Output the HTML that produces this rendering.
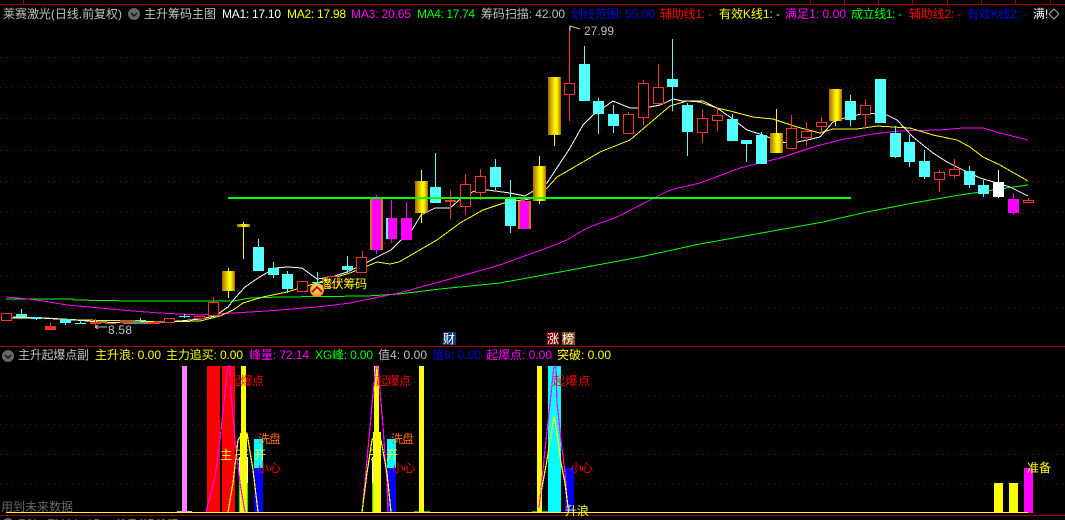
<!DOCTYPE html>
<html><head><meta charset="utf-8"><style>
html,body{margin:0;padding:0;background:#000;width:1065px;height:520px;overflow:hidden}
svg{display:block}
text{font-family:"Liberation Sans","WenQuanYi Zen Hei","Noto Sans CJK SC",sans-serif;font-size:12px}
.c{fill:#54ffff}.r{fill:#000;stroke:#ff3232}.f{fill:#ff3232}.m{fill:#ff00ff}.g{fill:url(#gold)}
.l{fill:none;stroke-width:1}
</style></head><body>
<svg width="1065" height="520" viewBox="0 0 1065 520" xmlns="http://www.w3.org/2000/svg" shape-rendering="crispEdges">
<defs><linearGradient id="gold" x1="0" x2="1" y1="0" y2="0"><stop offset="0" stop-color="#a86a00"/><stop offset=".55" stop-color="#ffff00"/><stop offset=".7" stop-color="#ffee00"/><stop offset="1" stop-color="#a86a00"/></linearGradient>
<radialGradient id="ic" cx=".5" cy=".35" r=".7"><stop offset="0" stop-color="#fff080"/><stop offset="1" stop-color="#f08010"/></radialGradient></defs>
<rect width="1065" height="520" fill="#000"/>
<!-- top border -->
<path d="M0 4.5H1065M23.5 0V4M810.5 0V4M844.5 0V4M878.5 0V4M912.5 0V4M947.5 0V4M981.5 0V4M1015.5 0V4M1050.5 0V4" stroke="#a80000" fill="none"/>
<!-- grid -->
<g stroke="#800000" stroke-dasharray="1 5" fill="none">
<path d="M0 57.5H1065M0 87.5H1065M0 118.5H1065M0 150.5H1065M0 181.5H1065M0 212.5H1065M0 243.5H1065M0 275.5H1065M0 307.5H1065"/>
<path d="M0 395.5H1065M0 424.5H1065M0 454.5H1065M0 483.5H1065"/>
</g>
<!-- MA lines -->
<g>
<polyline class="l" stroke="#00ff00" stroke-width="1.3" points="6,299 73,299 74,300 133,301 233,301 250,298 280,297 367,296 399,294 440,289 500,283 560,272 640,257 700,244 784,229 823,222 867,212 913,203 960,195 993,190 1028,185"/>
<polyline class="l" stroke="#ff00ff" stroke-width="1.3" points="6,297 28,299 43,301 67,305 100,308 133,311 160,313 200,315 233,313 267,311 317,307 350,303 399,293 450,279 500,265 552,246 567,240 587,228 617,217 650,200 670,190 700,183 740,168 780,158 813,147 840,140 873,134 897,131 940,130 963,128 983,128 1000,133 1028,140"/>
<polyline class="l" stroke="#ffff00" stroke-width="1.3" points="13,317 45,318 80,320 133,321 160,322 200,321 220,316 233,310 243,303 263,297 287,292 310,285 350,273 377,262 390,264 399,262 437,240 460,223 483,210 507,202 530,199 547,188 557,177 583,162 600,152 630,140 650,123 670,106 687,101 700,102 717,108 730,111 753,117 773,119 797,127 820,133 833,129 857,129 877,126 910,128 933,135 957,140 970,147 983,157 1000,165 1028,181"/>
<polyline class="l" stroke="#ffffff" stroke-width="1.2" points="6,318 40,318 75,320 100,322 130,323 146,323 180,321 200,319 215,316 228,307 235,298 245,287 258,278 275,268 288,267 302,268 317,279 332,277 347,272 362,265 377,257 391,250 399,242 412,230 421,215 435,208 450,208 465,195 480,189 495,191 510,193 525,196 547,183 570,148 583,125 593,115 613,101 630,108 645,108 660,105 673,99 683,101 703,101 717,108 730,117 747,130 763,135 780,142 793,143 807,140 820,137 833,122 847,117 867,113 887,115 897,120 913,137 933,153 947,162 963,170 980,178 997,183 1010,187 1028,196"/>
</g>
<!-- wicks -->
<path stroke="#54ffff" fill="none" d="M21.5 309V317M36.5 317V320M65.5 319V325M80.5 320V323M140.5 318V321M184.5 314V318M258.5 239V271M273.5 262V278M287.5 271V293M317.5 272V284M347.5 256V273M435.5 153V203M495.5 159V190M510.5 180V233M584.5 46V101M598.5 98V134M613.5 105V133M672.5 39V111M687.5 103V156M732.5 114V141M746.5 144V162M761.5 132V164M850.5 95V126M895.5 126V158M909.5 135V167M924.5 150V179M969.5 166V188M983.5 180V197"/>
<path stroke="#ff3232" fill="none" d="M50.5 323V328M95.5 319V327M213.5 297V315M362.5 251V257M450.5 190V219M465.5 174V215M480.5 169V200M569.5 27V121M628.5 112V134M643.5 80V125M658.5 64V104M702.5 109V143M717.5 108V131M791.5 115V149M806.5 122V146M821.5 117V133M865.5 99V128M939.5 170V192M954.5 159V178M1028.5 198V203"/>
<path stroke="#ff00ff" fill="none" d="M376.5 195V254M391.5 200V243M406.5 202V240M524.5 197V229M1013.5 193V215"/>
<path stroke="#ffff00" fill="none" d="M228.5 268V298M243.5 222V259M421.5 170V223M539.5 156V204M554.5 77V146M776.5 109V133M835.5 121V126"/>
<path stroke="#fff" fill="none" d="M998.5 170V198"/>
<!-- bodies -->
<rect class="r" x="1.5" y="313.5" width="10" height="7"/>
<rect class="c" x="16" y="314" width="11" height="3"/>
<rect class="c" x="31" y="317" width="11" height="2"/>
<rect class="f" x="45" y="326" width="11" height="4"/>
<rect class="c" x="60" y="319" width="11" height="4"/>
<rect class="c" x="75" y="323" width="11" height="1"/>
<rect class="f" x="90" y="322" width="11" height="2"/>
<rect class="f" x="105" y="323" width="11" height="1"/>
<rect class="f" x="120" y="321" width="11" height="2"/>
<rect class="c" x="135" y="320" width="11" height="1"/>
<rect class="f" x="149" y="322" width="11" height="2"/>
<rect class="r" x="164.5" y="318.5" width="10" height="4"/>
<rect class="c" x="179" y="316" width="11" height="1"/>
<rect class="r" x="194.5" y="316.5" width="10" height="2"/>
<rect class="r" x="208.5" y="302.5" width="10" height="13"/>
<rect class="g" x="222" y="271" width="13" height="20"/>
<rect class="g" x="237" y="224" width="13" height="3"/>
<rect class="c" x="253" y="247" width="11" height="24"/>
<rect class="c" x="268" y="268" width="11" height="7"/>
<rect class="c" x="282" y="274" width="11" height="15"/>
<rect class="r" x="297.5" y="281.5" width="10" height="10"/>
<rect class="c" x="312" y="282" width="11" height="1"/>
<rect class="r" x="327.5" y="276.5" width="10" height="11"/>
<rect class="c" x="342" y="266" width="11" height="4"/>
<rect class="r" x="356.5" y="257.5" width="10" height="15"/>
<rect fill="#d07a10" x="370" y="197" width="13" height="53"/><rect class="m" x="372" y="197" width="9" height="53"/>
<rect class="c" x="386" y="218" width="11" height="21"/><rect class="m" x="388" y="218" width="9" height="21"/>
<rect class="m" x="401" y="218" width="11" height="22"/>
<rect class="g" x="415" y="181" width="13" height="32"/>
<rect class="c" x="430" y="187" width="11" height="16"/>
<rect class="f" x="445" y="200" width="11" height="2"/>
<rect class="r" x="460.5" y="184.5" width="10" height="22"/>
<rect class="r" x="475.5" y="176.5" width="10" height="16"/>
<rect class="c" x="490" y="167" width="11" height="20"/>
<rect class="c" x="505" y="199" width="11" height="27"/>
<rect fill="#d07a10" x="518" y="201" width="13" height="28"/><rect class="m" x="520" y="201" width="9" height="28"/>
<rect class="g" x="533" y="166" width="13" height="35"/>
<rect class="g" x="548" y="77" width="13" height="58"/>
<rect class="r" x="564.5" y="83.5" width="10" height="11"/>
<rect class="c" x="579" y="64" width="11" height="37"/>
<rect class="c" x="593" y="101" width="11" height="13"/>
<rect class="c" x="608" y="114" width="11" height="12"/>
<rect class="r" x="623.5" y="114.5" width="10" height="19"/>
<rect class="r" x="638.5" y="83.5" width="10" height="34"/>
<rect class="r" x="653.5" y="87.5" width="10" height="16"/>
<rect class="c" x="667" y="79" width="11" height="8"/>
<rect class="c" x="682" y="105" width="11" height="27"/>
<rect class="r" x="697.5" y="118.5" width="10" height="14"/>
<rect class="r" x="712.5" y="115.5" width="10" height="5"/>
<rect class="c" x="727" y="119" width="11" height="22"/>
<rect class="c" x="741" y="140" width="11" height="4"/>
<rect class="c" x="756" y="135" width="11" height="29"/>
<rect class="g" x="770" y="133" width="13" height="20"/>
<rect class="r" x="786.5" y="128.5" width="10" height="20"/>
<rect class="r" x="801.5" y="131.5" width="10" height="6"/>
<rect class="r" x="816.5" y="122.5" width="10" height="4"/>
<rect class="g" x="829" y="89" width="13" height="32"/>
<rect class="c" x="845" y="101" width="11" height="19"/>
<rect class="r" x="860.5" y="105.5" width="10" height="9"/>
<rect class="c" x="875" y="79" width="11" height="44"/>
<rect class="c" x="890" y="133" width="11" height="24"/>
<rect class="c" x="904" y="142" width="11" height="20"/>
<rect class="c" x="919" y="161" width="11" height="16"/>
<rect class="r" x="934.5" y="172.5" width="10" height="7"/>
<rect class="r" x="949.5" y="169.5" width="10" height="6"/>
<rect class="c" x="964" y="171" width="11" height="14"/>
<rect class="c" x="978" y="185" width="11" height="9"/>
<rect fill="#fff" x="993" y="182" width="11" height="15"/>
<rect class="m" x="1008" y="199" width="11" height="14"/>
<rect class="r" x="1023.5" y="200.5" width="10" height="2"/>
<!-- horizontal green -->
<rect x="228" y="197" width="623" height="2" fill="#00ff00"/>
<!-- annotations main -->
<path d="M570 31V26L580 29M570 26l3 1" stroke="#c0c0c0" fill="none" shape-rendering="auto"/>
<text x="584" y="35" fill="#c0c0c0" textLength="30">27.99</text>
<path d="M95 327H107M95 327l3-2M95 327l3 2" stroke="#c0c0c0" fill="none" shape-rendering="auto"/>
<text x="108" y="334" fill="#c0c0c0" textLength="24">8.58</text>
<text x="320" y="288" fill="#ffff00" font-size="12" textLength="47">潜伏筹码</text>
<g shape-rendering="auto"><circle cx="317" cy="290" r="7" fill="url(#ic)"/><path d="M312 292l5-5 5 5" stroke="#c01808" stroke-width="2" fill="none"/></g>
<!-- badges -->
<rect x="443" y="332" width="13" height="13" fill="#0f3f78"/><text x="443" y="343" fill="#fff" textLength="13">财</text>
<rect x="547" y="332" width="12" height="13" fill="#800000"/><text x="547" y="343" fill="#fff" textLength="12">涨</text>
<rect x="562" y="332" width="13" height="13" fill="#8a4a10"/><text x="562" y="343" fill="#fff" textLength="13">榜</text>
<!-- header 1 -->
<text x="3" y="18" fill="#c0c0c0" textLength="119">莱赛激光(日线.前复权)</text>
<g shape-rendering="auto"><circle cx="134" cy="14" r="6" fill="#666"/><path d="M131 13l3 3 3-3" stroke="#111" stroke-width="1.4" fill="none"/></g>
<text x="144" y="18" fill="#c0c0c0" textLength="72">主升筹码主图</text>
<text x="222" y="18" fill="#fff" textLength="59">MA1: 17.10</text>
<text x="287" y="18" fill="#ffff00" textLength="59">MA2: 17.98</text>
<text x="351" y="18" fill="#ff00ff" textLength="60">MA3: 20.65</text>
<text x="417" y="18" fill="#00ff00" textLength="58">MA4: 17.74</text>
<text x="481" y="18" fill="#c0c0c0" textLength="84">筹码扫描: 42.00</text>
<text x="571" y="18" fill="#0000e0" textLength="84">划线范围: 55.00</text>
<text x="660" y="18" fill="#ff0000" textLength="52">辅助线1: -</text>
<text x="719" y="18" fill="#ffff00" textLength="61">有效K线1: -</text>
<text x="785" y="18" fill="#ff00ff" textLength="61">满足1: 0.00</text>
<text x="851" y="18" fill="#00ff00" textLength="51">成立线1: -</text>
<text x="909" y="18" fill="#ff0000" textLength="52">辅助线2: -</text>
<text x="967" y="18" fill="#0000e0" textLength="60">有效K线2: -</text>
<text x="1033" y="18" fill="#fff">满!</text>
<path d="M1054 9l5 5-5 5-5-5z" stroke="#aaa" fill="#000" shape-rendering="auto"/>
<!-- lower pane -->
<rect x="0" y="346" width="1065" height="1" fill="#a80000"/>
<g shape-rendering="auto"><circle cx="8" cy="356" r="6" fill="#666"/><path d="M5 355l3 3 3-3" stroke="#111" stroke-width="1.4" fill="none"/></g>
<text x="18" y="359" fill="#c0c0c0" textLength="71">主升起爆点副</text>
<text x="95" y="359" fill="#ffff00" textLength="66">主升浪: 0.00</text>
<text x="166" y="359" fill="#ffff00" textLength="77">主力追买: 0.00</text>
<text x="249" y="359" fill="#ff00ff" textLength="60">峰量: 72.14</text>
<text x="315" y="359" fill="#00ff00" textLength="58">XG峰: 0.00</text>
<text x="378" y="359" fill="#c0c0c0" textLength="49">值4: 0.00</text>
<text x="432" y="359" fill="#0000e0" textLength="49">值8: 0.00</text>
<text x="486" y="359" fill="#ff00ff" textLength="66">起爆点: 0.00</text>
<text x="557" y="359" fill="#ffff00" textLength="54">突破: 0.00</text>
<!-- lower bars -->
<rect x="177" y="511" width="15" height="1" fill="#c0c0a0"/>
<rect x="182" y="366" width="5" height="146" fill="#ff80ff"/>
<rect x="207" y="366" width="13" height="146" fill="#ff0000"/>
<rect x="222" y="366" width="13" height="146" fill="#ff0000"/>
<rect x="239" y="457" width="9" height="26" fill="#fff"/>
<rect x="239" y="483" width="9" height="29" fill="#00ff00"/>
<rect x="240" y="433" width="7" height="79" fill="#ffff00"/>
<rect x="241" y="366" width="5" height="146" fill="#ffff00"/>
<rect x="254" y="439" width="9" height="29" fill="#00ffff"/>
<rect x="254" y="468" width="9" height="44" fill="#0000ff"/>
<rect x="372" y="457" width="9" height="26" fill="#fff"/>
<rect x="372" y="483" width="9" height="29" fill="#00ff00"/>
<rect x="373" y="432" width="8" height="80" fill="#ffff00"/>
<rect x="374" y="366" width="5" height="146" fill="#ffff00"/>
<rect x="387" y="439" width="9" height="29" fill="#00ffff"/>
<rect x="387" y="468" width="9" height="44" fill="#0000ff"/>
<rect x="414" y="511" width="16" height="1" fill="#00c000"/>
<rect x="419" y="366" width="5" height="146" fill="#ffff00"/>
<rect x="532" y="511" width="16" height="1" fill="#00c000"/>
<rect x="537" y="366" width="5" height="146" fill="#ffff00"/>
<rect x="548" y="366" width="13" height="146" fill="#00ffff"/>
<rect x="565" y="468" width="9" height="44" fill="#0000ff"/>
<rect x="994" y="483" width="9" height="30" fill="#ffff00"/>
<rect x="1009" y="483" width="9" height="30" fill="#ffff00"/>
<rect x="1024" y="468" width="9" height="45" fill="#ff00ff"/>
<!-- triangles -->
<g fill="none" stroke-width="1.2">
<polyline stroke="#ff00ff" points="206,512 215,477 220,440 225,393 228,366 230,366 231,393 235,440 240,483 245,512"/>
<polyline stroke="#ffff00" points="228,512 233,483 238,440 243,433 247,433 253,470 258,512"/>
<polyline stroke="#ff00ff" points="363,503 370,427 373,393 376,366 378,366 383,427 387,483 388,512"/>
<polyline stroke="#ffff00" points="362,512 367,473 372,440 376,433 381,440 387,473 391,512"/>
<polyline stroke="#ff00ff" points="539,508 545,450 550,403 554,366 556,366 557,403 561,440 565,473 568,512"/>
<polyline stroke="#ffff00" points="541,493 547,460 550,440 554,416 557,433 561,463 565,483 568,507"/>
</g>
<rect x="6" y="512" width="1022" height="1" fill="#ffff00"/>
<rect x="0" y="515" width="1065" height="1" fill="#a80000"/>
<!-- lower labels -->
<text x="229" y="385" fill="#ff0000" textLength="35">起爆点</text>
<text x="258" y="443" fill="#ff6a10" textLength="23">洗盘</text>
<text x="220" y="459" fill="#ffff40" textLength="46">主开开</text>
<text x="257" y="472" fill="#ff0000" textLength="24">小心</text>
<text x="376" y="385" fill="#ff0000" textLength="35">起爆点</text>
<text x="391" y="443" fill="#ff6a10" textLength="23">洗盘</text>
<text x="370" y="459" fill="#ffff40" textLength="28">开开</text>
<text x="392" y="472" fill="#ff0000" textLength="23">小心</text>
<text x="553" y="385" fill="#ff0000" textLength="37">起爆点</text>
<text x="570" y="472" fill="#ff0000" textLength="23">小心</text>
<text x="565" y="515" fill="#ffff40" textLength="24">升浪</text>
<text x="1027" y="472" fill="#ffff00" textLength="24">准备</text>
<text x="1" y="511" fill="#666" textLength="72">用到未来数据</text>
<!-- clipped bottom row -->
<g shape-rendering="auto"><circle cx="8" cy="524" r="6" fill="#666"/></g>
<text x="18" y="528" fill="#c0c0c0" textLength="82">FSL: FMA1: 15</text>
<text x="115" y="528" fill="#ffff00" textLength="63">18: FMA5: 10.97</text>
</svg>
</body></html>
